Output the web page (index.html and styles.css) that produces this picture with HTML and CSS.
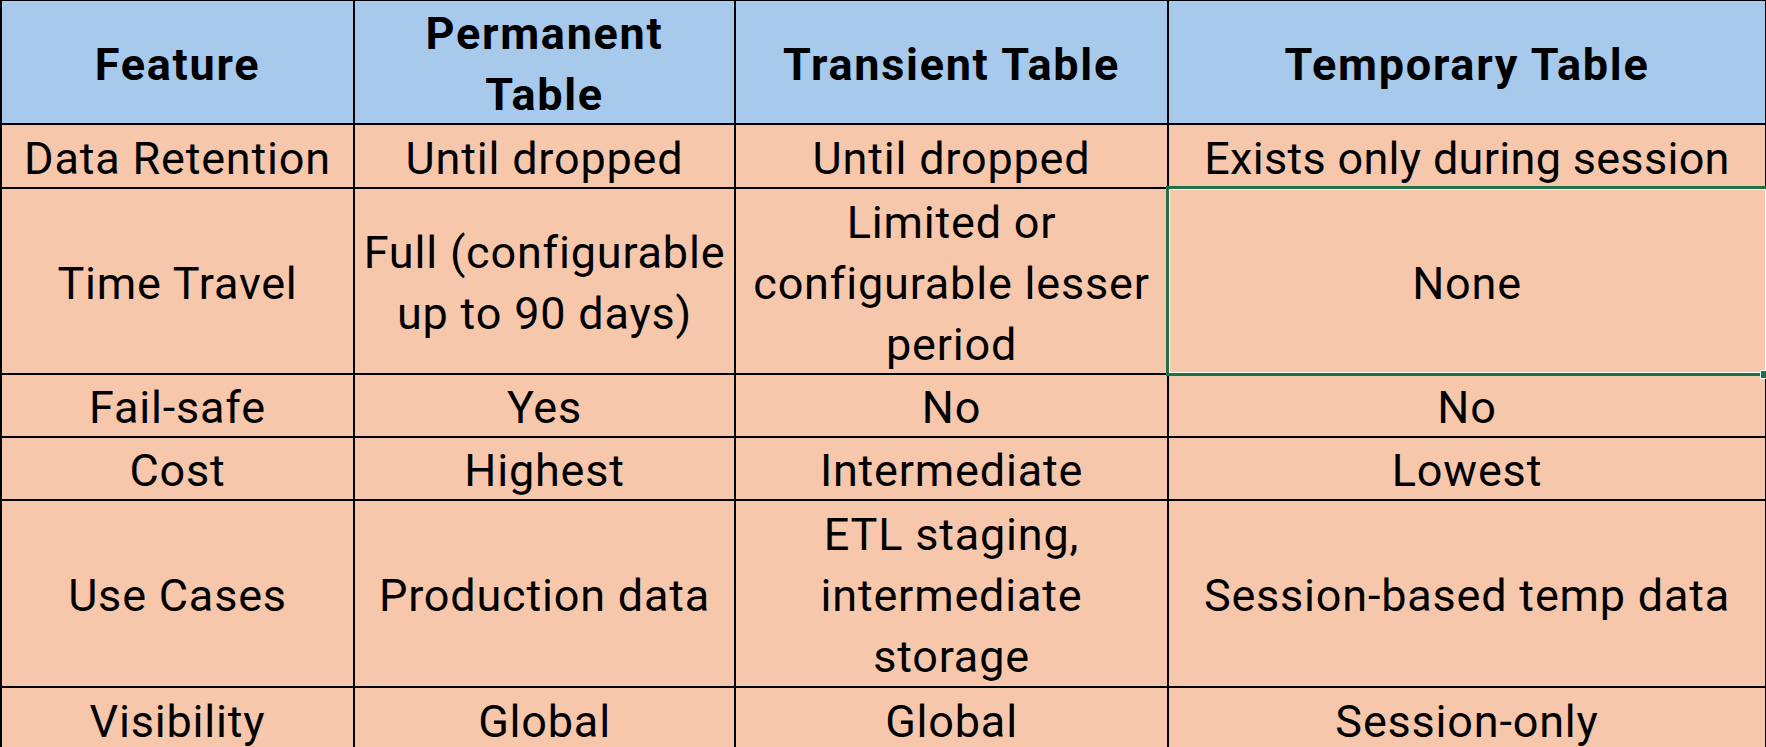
FILE: index.html
```html
<!DOCTYPE html>
<html>
<head>
<meta charset="utf-8">
<link rel="stylesheet" href="styles.css">
</head>
<body>
<div class="sheet">
  <div class="cell head">Feature</div>
  <div class="cell head">Permanent<br>Table</div>
  <div class="cell head">Transient Table</div>
  <div class="cell head">Temporary Table</div>

  <div class="cell">Data Retention</div>
  <div class="cell">Until dropped</div>
  <div class="cell">Until dropped</div>
  <div class="cell tight">Exists only during session</div>

  <div class="cell">Time Travel</div>
  <div class="cell">Full (configurable<br>up to 90 days)</div>
  <div class="cell">Limited or<br>configurable lesser<br>period</div>
  <div class="cell selected">None<span class="selbox"><span class="handle"></span></span></div>

  <div class="cell">Fail-safe</div>
  <div class="cell">Yes</div>
  <div class="cell">No</div>
  <div class="cell">No</div>

  <div class="cell">Cost</div>
  <div class="cell">Highest</div>
  <div class="cell">Intermediate</div>
  <div class="cell">Lowest</div>

  <div class="cell">Use Cases</div>
  <div class="cell">Production data</div>
  <div class="cell">ETL staging,<br>intermediate<br>storage</div>
  <div class="cell">Session-based temp data</div>

  <div class="cell">Visibility</div>
  <div class="cell">Global</div>
  <div class="cell">Global</div>
  <div class="cell">Session-only</div>
</div>
</body>
</html>
```

FILE: styles.css
```css
html, body {
  margin: 0;
  padding: 0;
  width: 1766px;
  height: 747px;
  overflow: hidden;
  background: #ffffff;
}

.sheet {
  display: grid;
  grid-template-columns: 351px 379px 431px 596px;
  grid-template-rows: 122px 62px 184px 61px 61px 185px 62px;
  column-gap: 2px;
  row-gap: 2px;
  padding: 1px 1px 0 2px;
  background: #000000;
  width: 1766px;
  box-sizing: border-box;
  font-family: Roboto, "Liberation Sans", sans-serif;
  font-size: 45px;
  line-height: 61px;
  letter-spacing: 0.8px;
  color: #000000;
}

.cell {
  background: #F7C7AC;
  display: flex;
  align-items: center;
  justify-content: center;
  text-align: center;
  padding-top: 4px;
  box-sizing: border-box;
  white-space: nowrap;
}

.tight {
  letter-spacing: 0.3px;
}

.head {
  background: #A6C9EC;
  font-weight: 700;
  letter-spacing: 1.7px;
}

.selected {
  position: relative;
}

.selbox {
  position: absolute;
  top: -3px;
  left: -3px;
  right: -4px;
  bottom: -3px;
  border: 3px solid #1E7145;
  box-shadow: inset 0 0 0 1px #ffffff;
}

.handle {
  position: absolute;
  right: -2px;
  bottom: -6px;
  width: 6px;
  height: 7px;
  background: #1E7145;
  border: 1px solid #ffffff;
}
```
